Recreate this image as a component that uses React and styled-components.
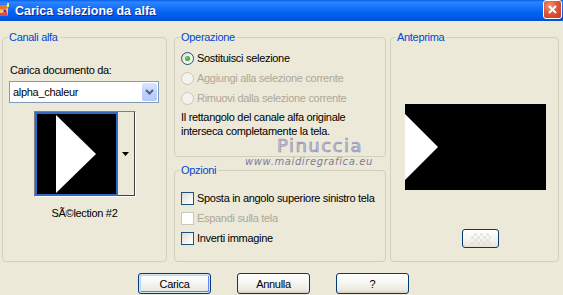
import React from "react";
import styled, { createGlobalStyle, css } from "styled-components";

const Global = createGlobalStyle`
  html, body { margin: 0; padding: 0; background: #ece9d8; }
  body {
    font-family: "Liberation Sans", Arial, sans-serif;
    font-size: 11px;
    letter-spacing: -0.3px;
    color: #000;
  }
`;

const Window = styled.div`
  position: relative;
  width: 563px;
  height: 295px;
  overflow: hidden;
  background: #ece9d8;
  display: flex;
  flex-direction: column;
`;

const TitleBar = styled.div`
  height: 21px;
  flex: none;
  display: flex;
  align-items: center;
  background: linear-gradient(to bottom, #0a5fe8 0%, #2d85ff 10%, #1673fa 35%, #0462f0 60%, #0058e6 85%, #0050d8 100%);
  padding-right: 1px;
`;

const TitleText = styled.div`
  flex: 1;
  margin-left: 5px;
  color: #fff;
  font-family: "Liberation Sans", Arial, sans-serif;
  font-weight: bold;
  font-size: 12.5px;
  letter-spacing: 0;
  text-shadow: 1px 1px 0 #0a2a8a;
`;

const CloseBtn = styled.div`
  width: 19px;
  height: 19px;
  margin-top: -2px;
  box-sizing: border-box;
  border: 1px solid #fff;
  border-radius: 3px;
  background: radial-gradient(circle at 35% 30%, #f29a7a 0%, #e2553a 45%, #c53b1c 100%);
  display: flex;
  align-items: center;
  justify-content: center;
`;

const Body = styled.div`
  display: grid;
  grid-template-columns: 165px 212px 166px;
  column-gap: 7px;
  padding: 10px 0 0 2px;
  height: 231px;
  & > :nth-child(3) { margin-left: -3px; }
`;

const MiddleCol = styled.div`
  display: flex;
  flex-direction: column;
  gap: 7px;
`;

const Group = styled.fieldset`
  margin: 0;
  padding: 0;
  min-width: 0;
  border: 1px solid #d0d0bf;
  border-radius: 4px;
  height: ${(p) => p.$h}px;
  box-sizing: border-box;
  display: flex;
  flex-direction: column;
`;

const Legend = styled.legend`
  margin-left: 5px;
  padding: 0 2px 0 1px;
  color: #0046d5;
  font-size: 11px;
  line-height: 13px;
`;

const Label = styled.div`
  line-height: 13px;
  margin: 20px 0 0 7px;
`;

const Select = styled.div`
  margin: 4px 0 0 6px;
  width: 150px;
  height: 22px;
  box-sizing: border-box;
  border: 1px solid #7f9db9;
  background: #fff;
  display: flex;
  align-items: center;
  padding-left: 3px;
`;

const SelectText = styled.span`
  flex: 1;
`;

const SelectArrow = styled.div`
  width: 15px;
  height: 18px;
  margin-right: 1px;
  border-radius: 2px;
  background: linear-gradient(to bottom, #dbe6fe 0%, #c2d3fc 50%, #b3c8f8 100%);
  display: flex;
  align-items: center;
  justify-content: center;
`;

const Thumb = styled.div`
  align-self: center;
  margin-top: 8px;
  width: 102px;
  height: 86px;
  display: flex;
  box-sizing: border-box;
  border: 1px solid #fff;
  border-top-color: #808080;
  border-left-color: #808080;
  background: #fff;
`;

const ThumbImage = styled.div`
  width: 83px;
  height: 84px;
  box-sizing: border-box;
  border: 2px solid #316ac5;
  background: #000;
  display: flex;
`;

const ThumbDrop = styled.div`
  flex: 1;
  background: #ece9d8;
  border-right: 1px solid #404040;
  border-bottom: 1px solid #404040;
  display: flex;
  align-items: center;
  justify-content: center;
`;

const Caption = styled.div`
  align-self: center;
  margin-top: 10px;
  line-height: 13px;
`;

const Options = styled.div`
  display: flex;
  flex-direction: column;
  padding: ${(p) => p.$top}px 0 0 6px;
`;

const Row = styled.div`
  height: 20px;
  display: flex;
  align-items: center;
  gap: 3px;
  white-space: nowrap;
  color: ${(p) => (p.$disabled ? "#aca899" : "#000")};
`;

const control = css`
  width: 13px;
  height: 13px;
  box-sizing: border-box;
  flex: none;
  display: flex;
  align-items: center;
  justify-content: center;
`;

const Radio = styled.span`
  ${control}
  border-radius: 50%;
  border: 1px solid ${(p) => (p.$disabled ? "#cac8bb" : "#1c5180")};
  background: ${(p) =>
    p.$disabled ? "#f4f3ee" : "linear-gradient(135deg, #dcd9cf 0%, #f7f6f2 60%, #fff 100%)"};
`;

const Dot = styled.span`
  width: 5px;
  height: 5px;
  border-radius: 50%;
  background: radial-gradient(circle at 40% 40%, #6ee06e, #21a121 70%);
`;

const Check = styled.span`
  ${control}
  border: 1px solid ${(p) => (p.$disabled ? "#cac8bb" : "#1c5180")};
  background: ${(p) =>
    p.$disabled ? "#fff" : "linear-gradient(135deg, #dcdcd4 0%, #f5f4ef 60%, #fff 100%)"};
`;

const Note = styled.div`
  margin-top: 2px;
  line-height: 14px;
  white-space: nowrap;
`;

const Preview = styled.div`
  align-self: center;
  margin: 60px 0 0 2px;
  width: 141px;
  height: 86px;
  background: #000;
  display: flex;
`;

const SmallBtn = styled.div`
  margin: 39px 0 0 71px;
  width: 37px;
  height: 19px;
  box-sizing: border-box;
  border: 1px solid #003c74;
  border-radius: 3px;
  background: linear-gradient(to bottom, #fff 0%, #f4f3ee 60%, #e6e3d6 100%);
  display: flex;
  align-items: center;
  justify-content: center;
`;

const Checker = styled.div`
  width: 20px;
  height: 11px;
  opacity: 0.35;
  background-image: linear-gradient(45deg, #ccc 25%, transparent 25%, transparent 75%, #ccc 75%),
    linear-gradient(45deg, #ccc 25%, transparent 25%, transparent 75%, #ccc 75%);
  background-size: 6px 6px;
  background-position: 0 0, 3px 3px;
`;

const Buttons = styled.div`
  display: flex;
  gap: 26px;
  padding: 11px 0 0 138px;
`;

const Button = styled.div`
  width: 73px;
  height: 21px;
  box-sizing: border-box;
  border: 1px solid #003c74;
  border-radius: 3px;
  background: linear-gradient(to bottom, #fff 0%, #f7f7f4 40%, #ece9e0 85%, #d6d0c5 100%);
  display: flex;
  align-items: center;
  justify-content: center;
  ${(p) =>
    p.$default &&
    css`
      box-shadow: inset 0 0 0 1px #cee7ff, inset 1px 1px 0 1px #bcd4f6, inset -1px -1px 0 1px #6982ee;
    `}
`;

const Watermark = styled.div`
  position: absolute;
  left: 245px;
  top: 138px;
  width: 120px;
  text-align: center;
  pointer-events: none;
`;

const WmName = styled.div`
  font-family: "DejaVu Sans", sans-serif;
  font-size: 18px;
  line-height: 16px;
  letter-spacing: 1.5px;
  color: #c4c4dc;
  -webkit-text-stroke: 0.6px #8a8aae;
  margin-left: 30px;
`;

const WmUrl = styled.div`
  font-family: "DejaVu Sans", sans-serif;
  font-style: italic;
  font-size: 10px;
  line-height: 12px;
  letter-spacing: 0.6px;
  color: #7c7c9a;
  margin-top: 2px;
`;

const AppIcon = () => (
  <svg width="10" height="16" viewBox="0 0 10 16">
    <rect x="0" y="2" width="8" height="11" fill="#f5c27a" />
    <path d="M0 2 L6 2 L8 5 L3 7 L0 6 Z" fill="#e8742a" />
    <circle cx="5" cy="8" r="1.5" fill="#6a2b8c" />
    <path d="M0 10 L7 9 L8 13 L0 13 Z" fill="#d94c4c" />
    <path d="M7 0 L9 0 L9 4 L7 4 Z" fill="#f7e46a" />
  </svg>
);

const Chevron = () => (
  <svg width="9" height="6" viewBox="0 0 9 6">
    <path d="M1 1 L4.5 4.5 L8 1" stroke="#4d6185" strokeWidth="2" fill="none" />
  </svg>
);

const App = () => (
  <>
    <Global />
    <Window>
      <TitleBar>
        <AppIcon />
        <TitleText>Carica selezione da alfa</TitleText>
        <CloseBtn>
          <svg width="11" height="11" viewBox="0 0 11 11">
            <path d="M2 2 L9 9 M9 2 L2 9" stroke="#fff" strokeWidth="2" />
          </svg>
        </CloseBtn>
      </TitleBar>

      <Body>
        <Group $h={231}>
          <Legend>Canali alfa</Legend>
          <Label>Carica documento da:</Label>
          <Select>
            <SelectText>alpha_chaleur</SelectText>
            <SelectArrow>
              <Chevron />
            </SelectArrow>
          </Select>
          <Thumb>
            <ThumbImage>
              <svg width="79" height="80" viewBox="0 0 79 80">
                <path d="M19 1 L59 40 L19 79 Z" fill="#fff" />
              </svg>
            </ThumbImage>
            <ThumbDrop>
              <svg width="7" height="4" viewBox="0 0 7 4">
                <path d="M0 0 L7 0 L3.5 4 Z" fill="#000" />
              </svg>
            </ThumbDrop>
          </Thumb>
          <Caption>SÃ©lection #2</Caption>
        </Group>

        <MiddleCol>
          <Group $h={126}>
            <Legend>Operazione</Legend>
            <Options $top={4}>
              <Row>
                <Radio>
                  <Dot />
                </Radio>
                Sostituisci selezione
              </Row>
              <Row $disabled>
                <Radio $disabled />
                Aggiungi alla selezione corrente
              </Row>
              <Row $disabled>
                <Radio $disabled />
                Rimuovi dalla selezione corrente
              </Row>
              <Note>
                Il rettangolo del canale alfa originale
                <br />
                interseca completamente la tela.
              </Note>
            </Options>
          </Group>
          <Group $h={98}>
            <Legend>Opzioni</Legend>
            <Options $top={11}>
              <Row>
                <Check />
                Sposta in angolo superiore sinistro tela
              </Row>
              <Row $disabled>
                <Check $disabled />
                Espandi sulla tela
              </Row>
              <Row>
                <Check />
                Inverti immagine
              </Row>
            </Options>
          </Group>
        </MiddleCol>

        <Group $h={231}>
          <Legend>Anteprima</Legend>
          <Preview>
            <svg width="141" height="86" viewBox="0 0 141 86">
              <path d="M0 10 L33 43 L0 76 Z" fill="#fff" />
            </svg>
          </Preview>
          <SmallBtn>
            <Checker />
          </SmallBtn>
        </Group>
      </Body>

      <Buttons>
        <Button $default>Carica</Button>
        <Button>Annulla</Button>
        <Button>?</Button>
      </Buttons>

      <Watermark>
        <WmName>Pinuccia</WmName>
        <WmUrl>www.maidiregrafica.eu</WmUrl>
      </Watermark>
    </Window>
  </>
);

export default App;
